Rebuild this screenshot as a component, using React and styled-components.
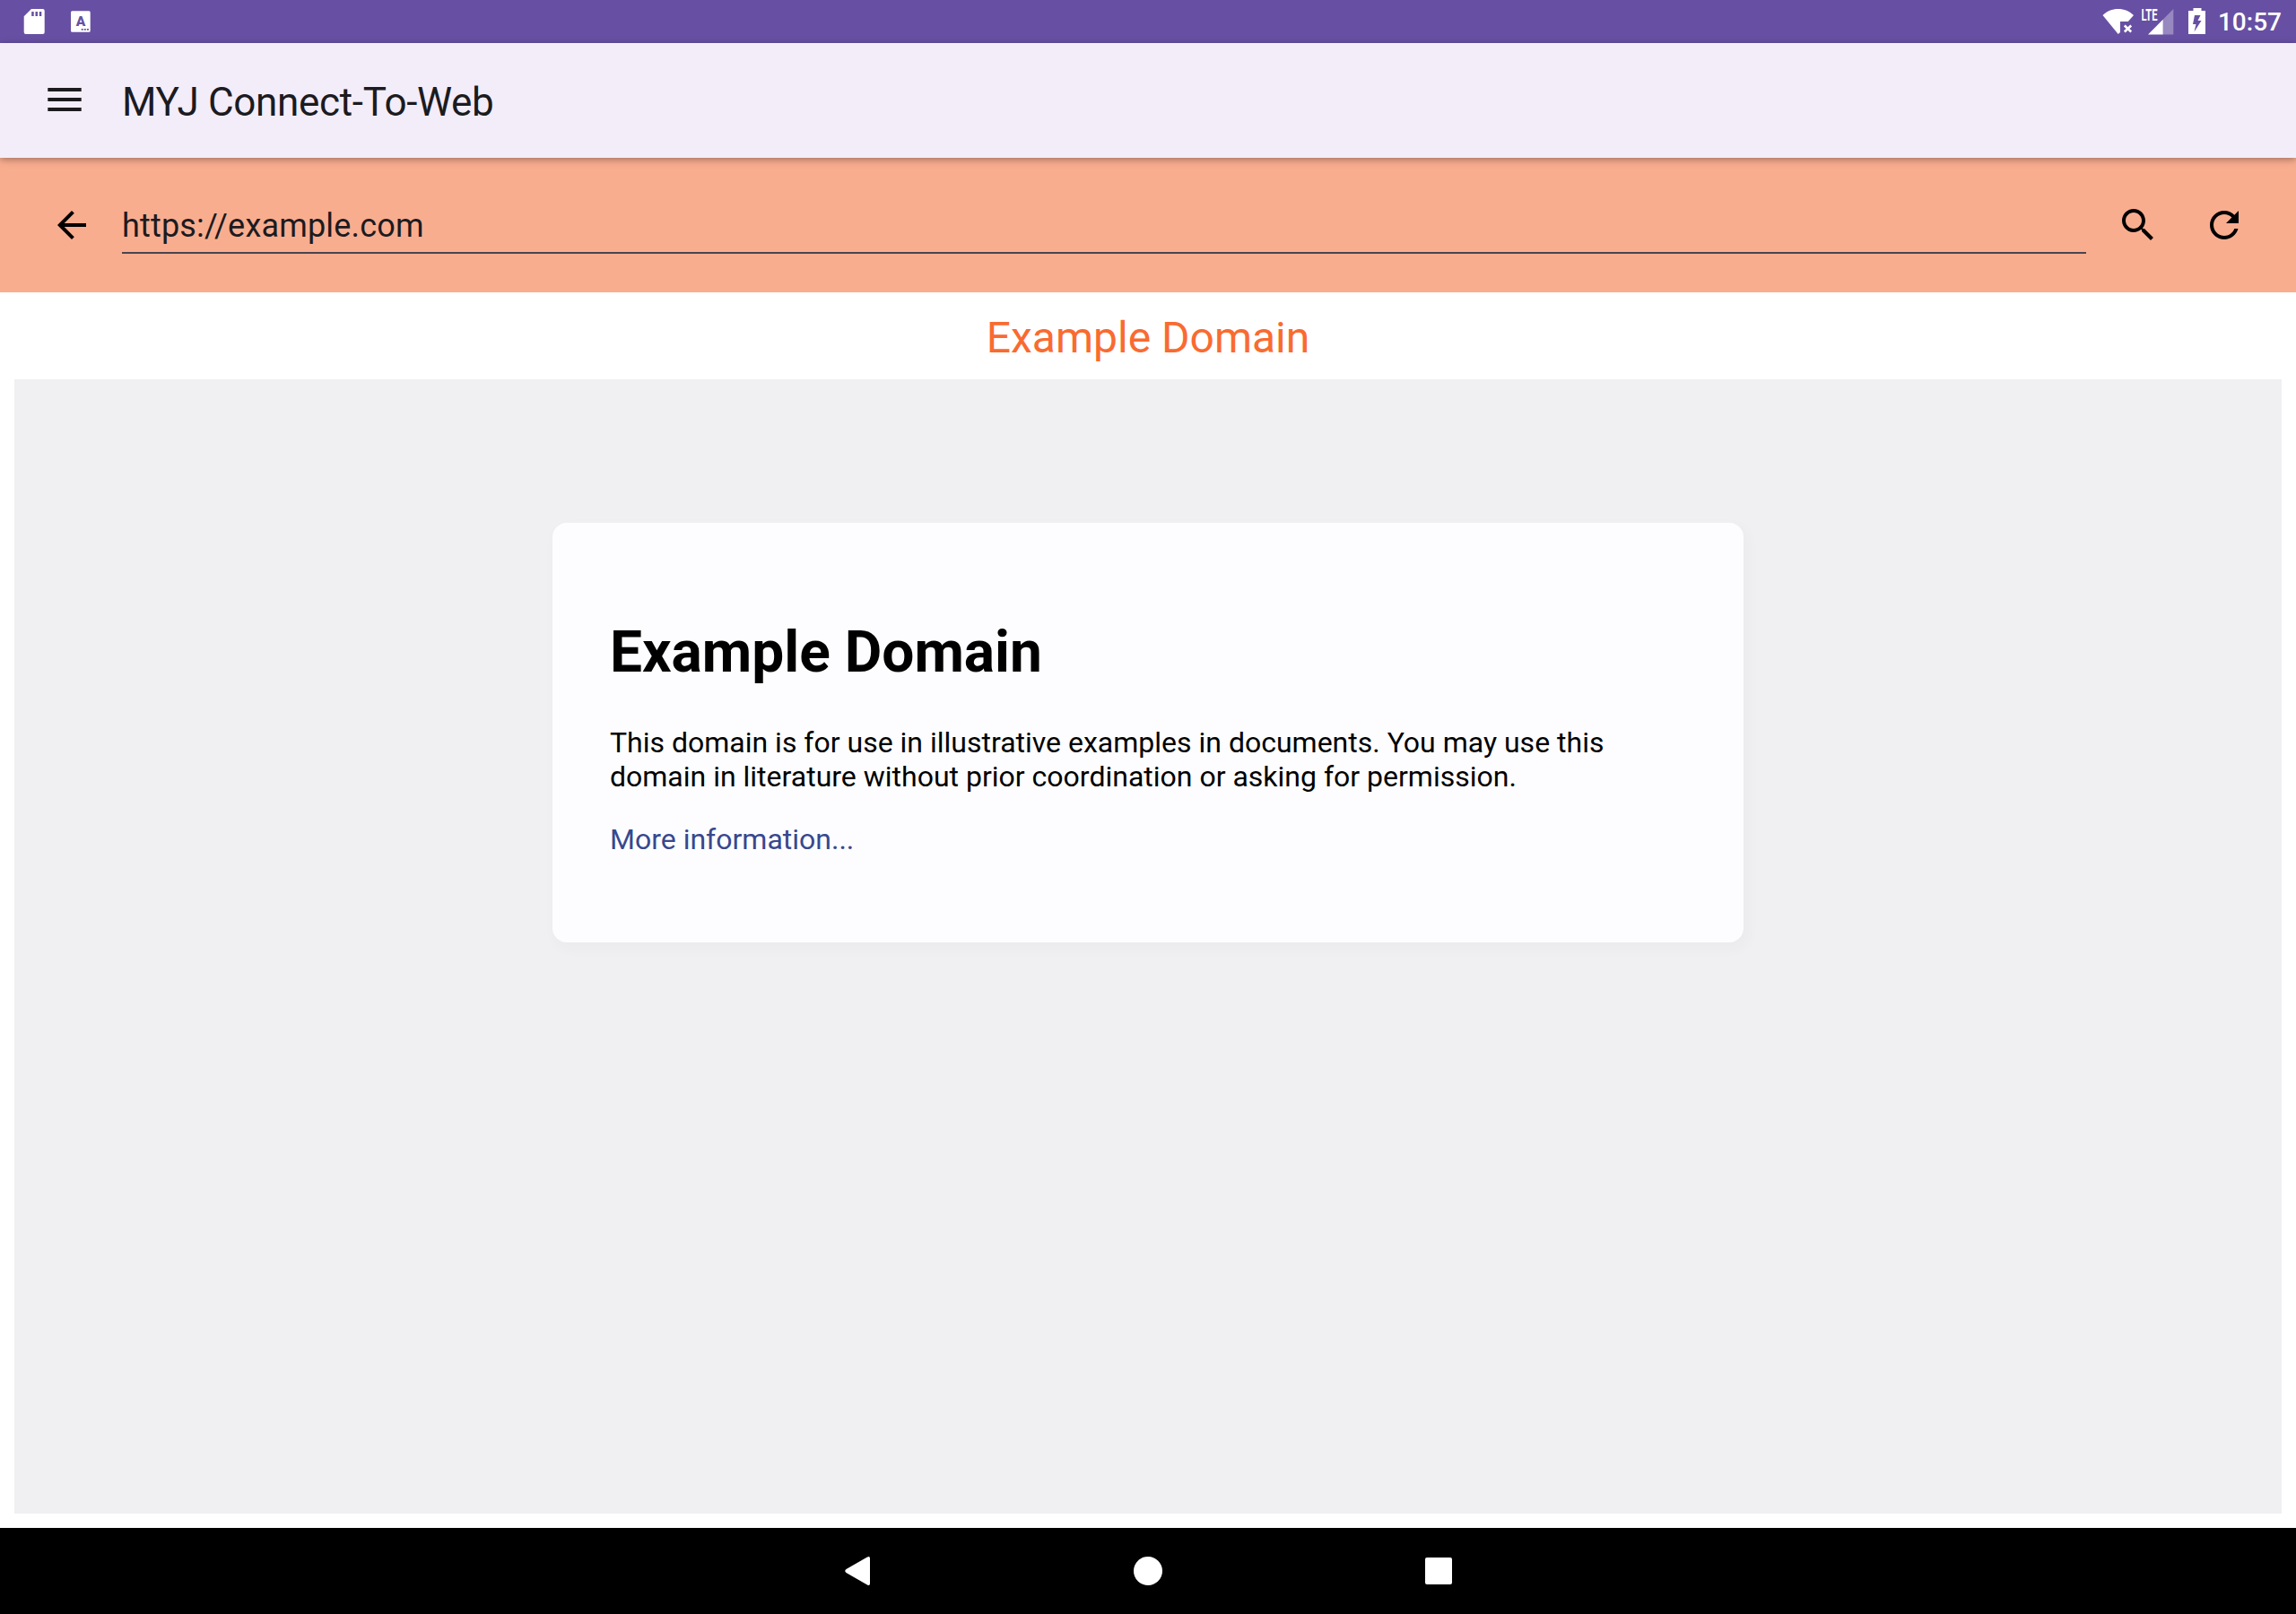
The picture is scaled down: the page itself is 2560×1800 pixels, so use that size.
import React from "react";
import styled, { createGlobalStyle } from "styled-components";

const Global = createGlobalStyle`
  * { box-sizing: border-box; }
  body { margin: 0; background: #fff; font-family: Roboto, "Liberation Sans", sans-serif; }
`;

const Screen = styled.div`
  width: 2560px;
  height: 1800px;
  display: flex;
  flex-direction: column;
  overflow: hidden;
`;

const StatusBar = styled.header`
  flex: none;
  height: 48px;
  background: #6750a3;
  color: #fff;
  display: flex;
  align-items: center;
  justify-content: space-between;
  padding: 0 16px 0 20px;
`;

const Notifications = styled.div`
  display: flex;
  align-items: center;
  gap: 16px;
`;

const SystemIcons = styled.div`
  display: flex;
  align-items: center;
`;

const Icon = styled.svg`
  display: block;
  flex: none;
  width: ${(p) => p.$w}px;
  height: ${(p) => p.$h || p.$w}px;
  margin-left: ${(p) => p.$ml || 0}px;
  fill: currentColor;
`;

const Glyph = styled.text`
  font-family: Roboto, "Liberation Sans", sans-serif;
  font-weight: ${(p) => p.$weight || 700};
  font-size: ${(p) => p.$size}px;
`;

const Clock = styled.time`
  margin-left: 13px;
  padding-top: 2px;
  font-size: 28px;
  line-height: 34px;
  font-weight: 500;
`;

const AppBar = styled.div`
  flex: none;
  position: relative;
  z-index: 1;
  height: 128px;
  background: #f3edf9;
  color: #1c1b1f;
  display: flex;
  align-items: center;
  padding-left: 48px;
  box-shadow: 0 2px 8px rgba(0, 0, 0, 0.35);
`;

const AppTitle = styled.h1`
  margin: 0 0 0 40px;
  padding-top: 3px;
  font-size: 44px;
  line-height: 52px;
  font-weight: 400;
  letter-spacing: -0.33px;
`;

const AddressBar = styled.div`
  flex: none;
  height: 150px;
  background: #f9ad8f;
  display: flex;
  align-items: center;
  padding: 0 56px;
`;

const Address = styled.div`
  flex: 1;
  align-self: flex-start;
  height: 66px;
  margin: 41px 34px 0 32px;
  padding-top: 14px;
  border-bottom: 2px solid #49454f;
  color: #1c1b1f;
  font-size: 36px;
  line-height: 42px;
  letter-spacing: 0.18px;
`;

const PageTitle = styled.h2`
  flex: none;
  margin: 0;
  height: 97px;
  line-height: 101px;
  text-align: center;
  font-size: 48px;
  font-weight: 400;
  color: #f96b30;
`;

const WebView = styled.main`
  flex: 1;
  margin: 0 16px 16px;
  padding-top: 160px;
  background: #f0f0f2;
`;

const Card = styled.article`
  width: 1328px;
  height: 468px;
  margin: 0 auto;
  padding: 64px;
  border-radius: 16px;
  background: #fdfdff;
  box-shadow: 4px 6px 14px 4px rgba(0, 0, 0, 0.02);
  color: #000;
  font-size: 32px;
  line-height: 38px;

  h1 { margin: 43px 0 44px; font-size: 64px; line-height: 75px; font-weight: 700; }
  p { margin: 32px 0; }
  a { color: #38488f; text-decoration: none; }
`;

const NavBar = styled.nav`
  flex: none;
  height: 96px;
  background: #000;
  color: #fff;
  display: flex;
  justify-content: center;
  align-items: center;
  gap: 276px;
`;

export default function App() {
  return (
    <Screen>
      <Global />
      <StatusBar>
        <Notifications>
          <Icon $w={36} viewBox="0 0 36 36">
            <path
              fillRule="evenodd"
              d="M15 4h12.700q2 0 2 2v24q0 2-2 2H8.700q-2 0-2-2V12.300zM15.200 7v5h2.500v-5zM19.500 7v5h2.500v-5zM23.800 7v5h2.500v-5z"
            />
          </Icon>
          <Icon $w={36} viewBox="0 0 36 36">
            <path
              fillRule="evenodd"
              d="M8.500 6.300h18.700q1.500 0 1.500 1.500v20.400q0 1.500-1.500 1.500H8.500q-1.500 0-1.500-1.500V7.800q0-1.500 1.500-1.500zM18.700 26v1.700h2V26zM21.800 26v1.700h2V26zM24.900 26v1.700h2V26z"
            />
            <Glyph x="18" y="23" $size={15.5} $weight={900} textAnchor="middle" fill="#6750a3">A</Glyph>
          </Icon>
        </Notifications>
        <SystemIcons>
          <Icon $w={36} viewBox="0 0 36 36">
            <path d="M0.500 11C5 6.500 11 4 17.700 4S30.500 6.500 35 11L28.800 18H20v12L17.700 32z" />
            <path d="M24.800 22.500l7.400 7M32.200 22.500L24.800 29.500" stroke="currentColor" strokeWidth="2.600" />
          </Icon>
          <Icon $w={36} $ml={8} viewBox="0 0 36 36">
            <Glyph x="-0.5" y="16.700" $size={17.8} textLength="18" lengthAdjust="spacingAndGlyphs">LTE</Glyph>
            <path d="M35.300 4v28.500H23.700V15.700z" opacity="0.320" />
            <path d="M23.700 15.700V32.500H7z" />
          </Icon>
          <Icon $w={20} $h={36} $ml={16} viewBox="0 0 20 36">
            <path
              fillRule="evenodd"
              d="M5.500 3h9v3H19v26H0V6h5.500zM7 11L5 21h3.500L6.500 29.500 14.500 17h-4l3-6z"
            />
          </Icon>
          <Clock>10:57</Clock>
        </SystemIcons>
      </StatusBar>
      <AppBar>
        <Icon $w={48} viewBox="0 0 48 48">
          <path d="M5.300 10h37.400v4H5.300zM5.300 21h37.400v4H5.300zM5.300 32h37.400v4H5.300z" />
        </Icon>
        <AppTitle>MYJ Connect-To-Web</AppTitle>
      </AppBar>
      <AddressBar>
        <Icon $w={48} viewBox="0 0 24 24">
          <path d="M20 11H7.830l5.590-5.590L12 4l-8 8 8 8 1.410-1.410L7.830 13H20v-2z" />
        </Icon>
        <Address>https://example.com</Address>
        <Icon $w={48} viewBox="0 0 24 24">
          <path d="M15.500 14h-.79l-.28-.27C15.410 12.590 16 11.110 16 9.500 16 5.910 13.090 3 9.500 3S3 5.910 3 9.500 5.910 16 9.500 16c1.610 0 3.090-.59 4.230-1.570l.27.280v.79l5 4.990L20.490 19l-4.990-5zm-6 0C7.010 14 5 11.990 5 9.500S7.010 5 9.500 5 14 7.010 14 9.500 11.990 14 9.500 14z" />
        </Icon>
        <Icon $w={48} $ml={48} viewBox="0 0 24 24">
          <path d="M17.650 6.350C16.200 4.900 14.210 4 12 4c-4.420 0-7.990 3.580-7.990 8s3.570 8 7.990 8c3.730 0 6.840-2.550 7.730-6h-2.080c-.82 2.330-3.040 4-5.650 4-3.310 0-6-2.690-6-6s2.690-6 6-6c1.660 0 3.140.69 4.220 1.780L13 11h7V4l-2.350 2.350z" />
        </Icon>
      </AddressBar>
      <PageTitle>Example Domain</PageTitle>
      <WebView>
        <Card>
          <h1>Example Domain</h1>
          <p>
            This domain is for use in illustrative examples in documents. You may use this
            domain in literature without prior coordination or asking for permission.
          </p>
          <p><a>More information...</a></p>
        </Card>
      </WebView>
      <NavBar>
        <Icon $w={48} viewBox="0 0 48 48">
          <path d="M35 8.500Q38 7 38 10V38Q38 41 35 39.500L11.500 26Q9 24 11.500 22z" />
        </Icon>
        <Icon $w={48} viewBox="0 0 48 48"><circle cx="24" cy="24" r="16" /></Icon>
        <Icon $w={48} viewBox="0 0 48 48"><rect x="9" y="9" width="30" height="30" rx="2" /></Icon>
      </NavBar>
    </Screen>
  );
}
